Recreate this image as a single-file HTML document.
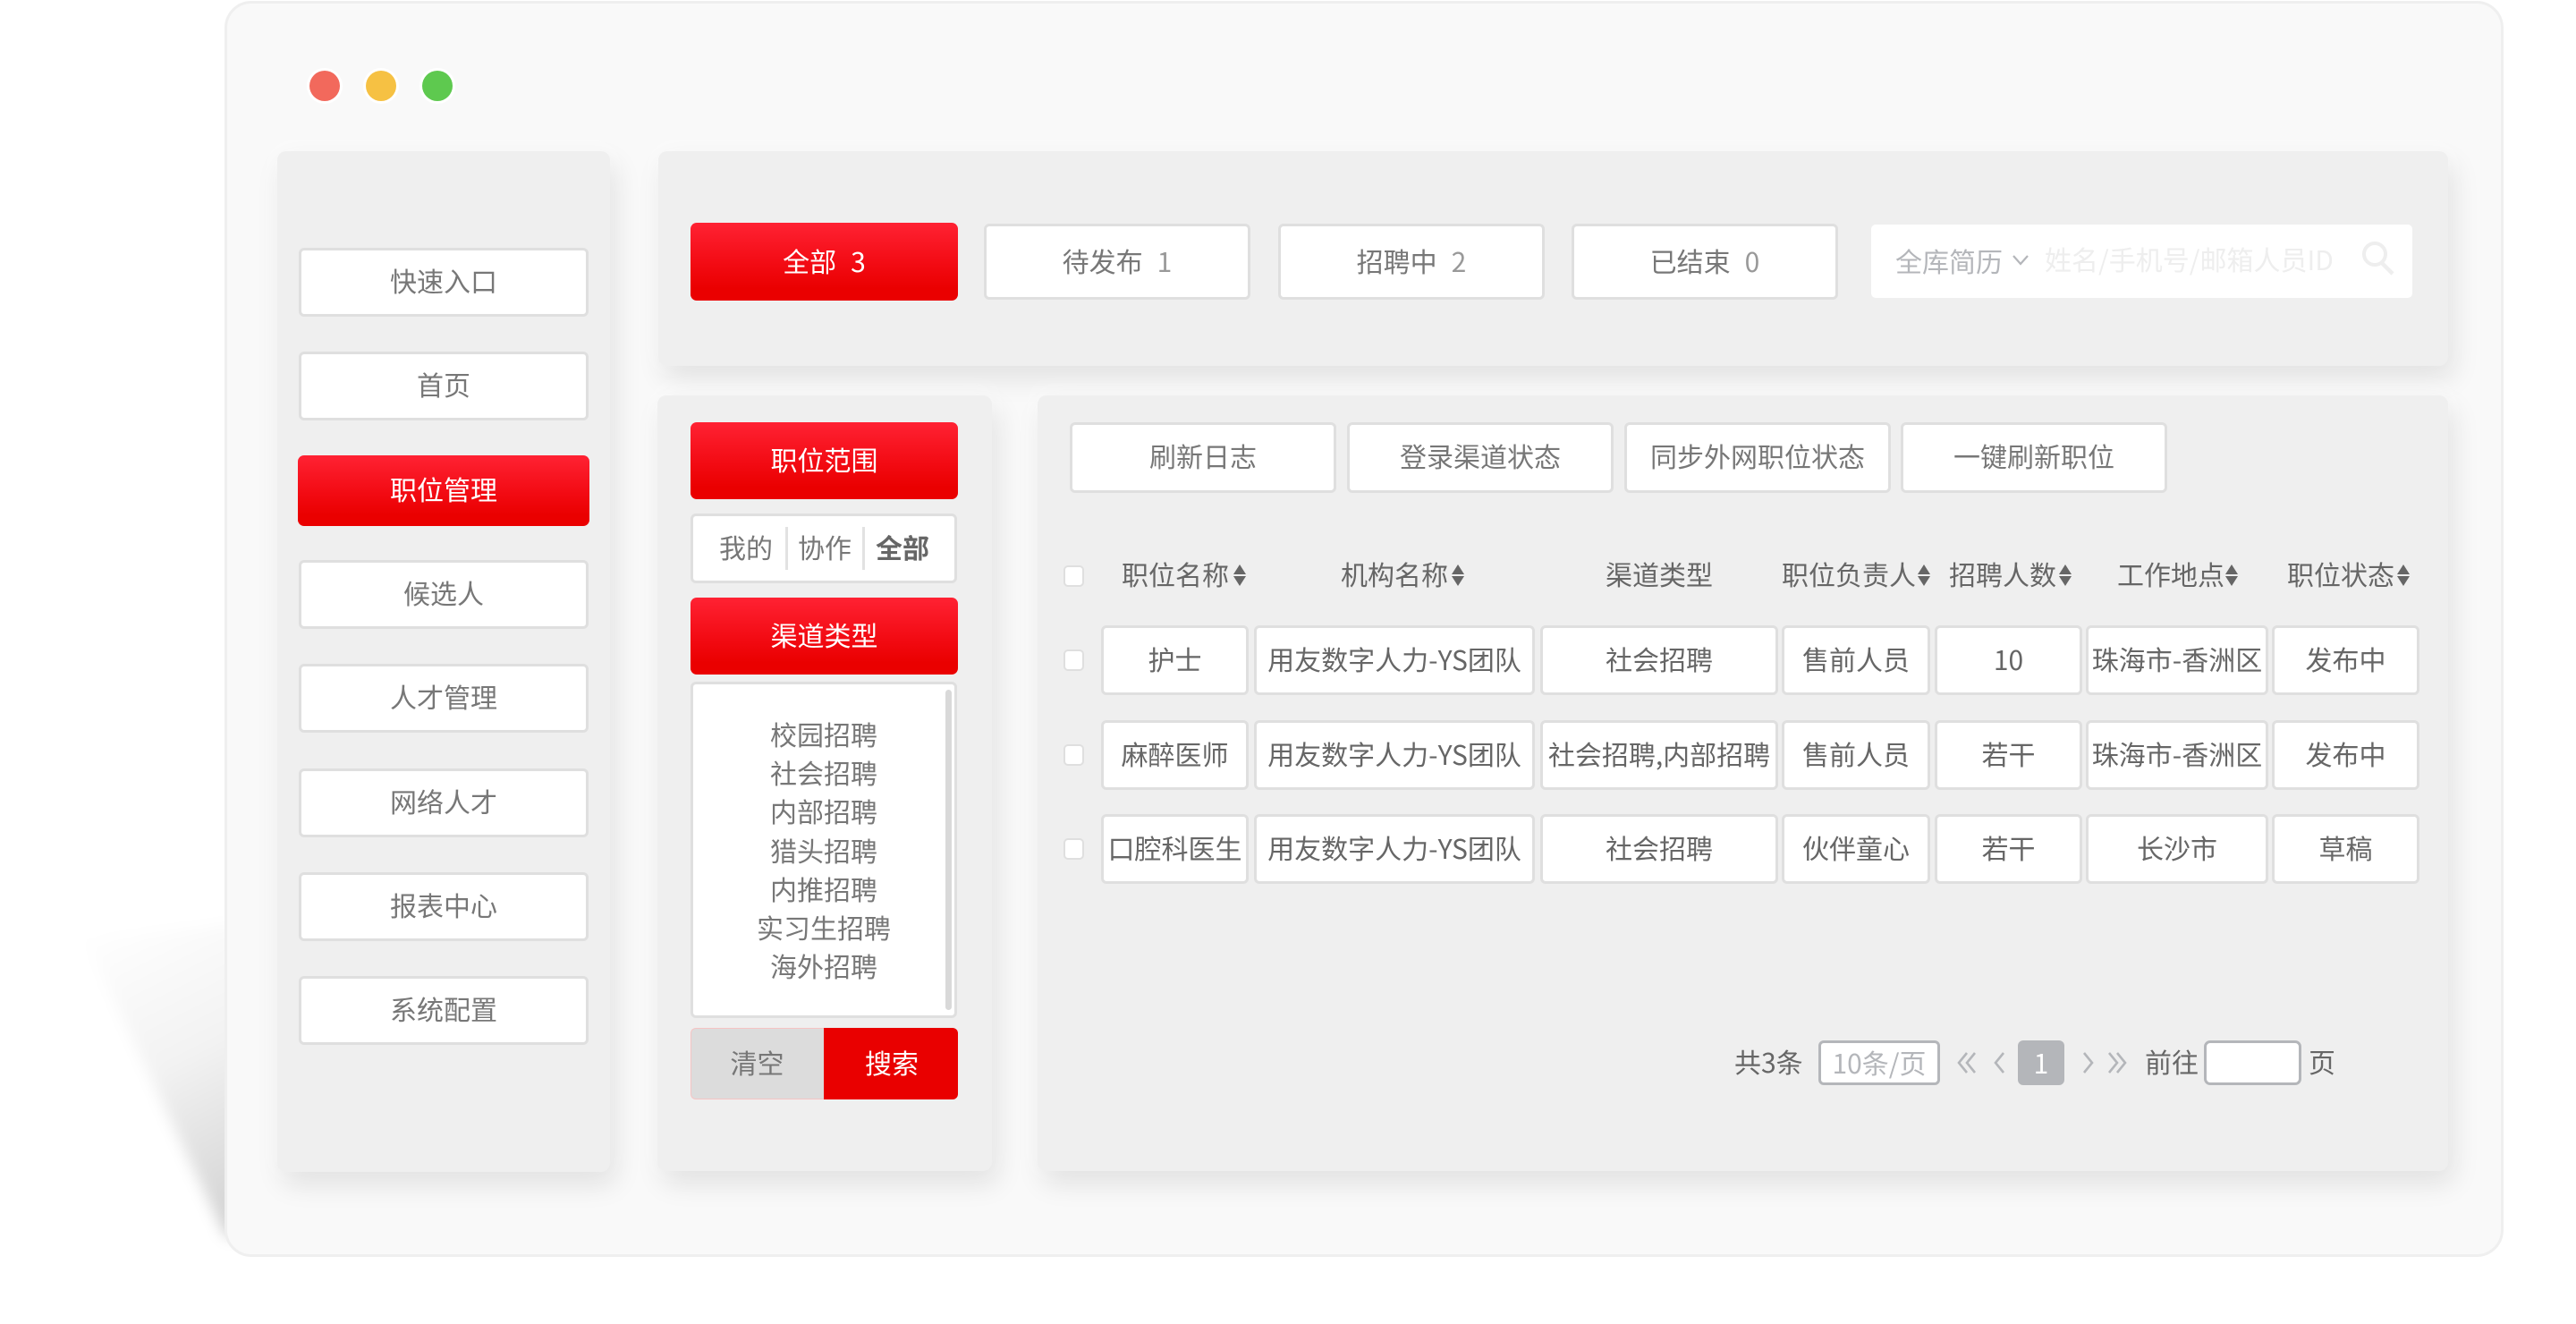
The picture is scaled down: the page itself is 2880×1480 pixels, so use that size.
<!DOCTYPE html>
<html lang="zh-CN">
<head>
<meta charset="utf-8">
<title>职位管理</title>
<style>
html,body{margin:0;padding:0;background:#fff;}
body{position:relative;width:2880px;height:1480px;overflow:hidden;font-family:"Noto Sans CJK SC","Liberation Sans",sans-serif;font-size:30px;color:#777;}
div,span.a{position:absolute;box-sizing:border-box;}
.win{left:251px;top:1px;width:2548px;height:1404px;background:#f9f9f9;border:3px solid #efefef;border-radius:30px;}
.dot{width:34px;height:34px;border-radius:50%;top:79px;box-shadow:0 0 0 3px #fff;}
.panel{background:#efefef;border-radius:10px;box-shadow:6px 14px 30px rgba(0,0,0,.1),0 0 24px 6px rgba(255,255,255,.5);}
.b{background:#fff;border:3px solid #dfdfdf;border-radius:6px;display:flex;align-items:center;justify-content:center;white-space:nowrap;line-height:1;color:#777;padding-bottom:4px;}
.r{background:linear-gradient(180deg,#ff2233 0%,#f20a12 55%,#ea0000 85%);border-radius:7px;color:#fff;display:flex;align-items:center;justify-content:center;white-space:nowrap;line-height:1;padding-bottom:4px;}
.n{height:77px;left:334px;width:324px;padding-bottom:6px;}
.tab{top:250px;height:85px;width:298px;}
.tab i,.r i{font-style:normal;margin-left:16px;color:#999;}
.r i{color:#fff;}
.act{top:472px;height:79px;padding-bottom:6px;}
.cb{left:1189px;width:23px;height:24px;background:#fff;border:2px solid #dfdfdf;border-radius:5px;}
.c{height:78px;color:#666;}
.th{top:620px;height:42px;line-height:42px;color:#666;white-space:nowrap;}
.sort{top:631px;width:14px;height:24px;}
.sort:before,.sort:after{content:"";position:absolute;left:0;border-left:7px solid transparent;border-right:7px solid transparent;}
.sort:before{top:0;border-bottom:11px solid #666;}
.sort:after{bottom:0;border-top:11px solid #666;}
.li{left:773px;width:296px;text-align:center;height:44px;line-height:44px;color:#777;}
.t{height:44px;line-height:44px;white-space:nowrap;color:#666;}
</style>
</head>
<body>

<svg style="position:absolute;left:0;top:0" width="400" height="1480">
  <defs>
    <linearGradient id="sg" x1="95" y1="1040" x2="270" y2="1390" gradientUnits="userSpaceOnUse">
      <stop offset="0" stop-color="#000" stop-opacity="0"/>
      <stop offset=".45" stop-color="#000" stop-opacity=".05"/>
      <stop offset="1" stop-color="#000" stop-opacity=".19"/>
    </linearGradient>
    <filter id="bl" x="-30%" y="-30%" width="160%" height="160%"><feGaussianBlur stdDeviation="8"/></filter>
  </defs>
  <polygon points="95,1050 290,1030 290,1382 252,1382" fill="url(#sg)" filter="url(#bl)"/>
</svg>

<div class="win"></div>
<div class="dot" style="left:346px;background:#f2695c"></div>
<div class="dot" style="left:409px;background:#f6c143"></div>
<div class="dot" style="left:472px;background:#5ec94f"></div>

<!-- sidebar -->
<div class="panel" style="left:310px;top:169px;width:372px;height:1141px"></div>
<div class="b n" style="top:277px">快速入口</div>
<div class="b n" style="top:393px">首页</div>
<div class="r" style="left:333px;top:509px;width:326px;height:79px;padding-bottom:6px">职位管理</div>
<div class="b n" style="top:626px">候选人</div>
<div class="b n" style="top:742px">人才管理</div>
<div class="b n" style="top:859px">网络人才</div>
<div class="b n" style="top:975px">报表中心</div>
<div class="b n" style="top:1091px">系统配置</div>

<!-- top panel -->
<div class="panel" style="left:736px;top:169px;width:2001px;height:240px"></div>
<div class="r" style="left:772px;top:249px;width:299px;height:87px">全部<i>3</i></div>
<div class="b tab" style="left:1100px">待发布<i>1</i></div>
<div class="b tab" style="left:1429px">招聘中<i>2</i></div>
<div class="b tab" style="left:1757px">已结束<i>0</i></div>
<div style="left:2092px;top:251px;width:605px;height:82px;background:#fff;border-radius:5px"></div>
<div class="t" style="left:2119px;top:269px;color:#b4b6ba">全库简历</div>
<svg style="position:absolute;left:2249px;top:284px" width="20" height="14"><path d="M2 2 L10 11 L18 2" fill="none" stroke="#b4b6ba" stroke-width="2.2"/></svg>
<div class="t" style="left:2286px;top:267px;color:#eeeeee">姓名/手机号/邮箱人员ID</div>
<svg style="position:absolute;left:2640px;top:268px" width="40" height="40"><circle cx="15" cy="16" r="12" fill="none" stroke="#eeeeee" stroke-width="4"/><path d="M23 26 L35 38" fill="none" stroke="#eeeeee" stroke-width="4.5"/></svg>

<!-- filter panel -->
<div class="panel" style="left:735px;top:442px;width:374px;height:867px"></div>
<div class="r" style="left:772px;top:472px;width:299px;height:86px">职位范围</div>
<div class="b" style="left:772px;top:574px;width:298px;height:78px"></div>
<div class="t" style="left:804px;top:589px;color:#777">我的</div>
<div style="left:878px;top:589px;width:3px;height:48px;background:#e2e2e2"></div>
<div class="t" style="left:892px;top:589px;color:#777">协作</div>
<div style="left:964px;top:589px;width:3px;height:48px;background:#e2e2e2"></div>
<div class="t" style="left:979px;top:589px;color:#666;font-weight:700">全部</div>
<div class="r" style="left:772px;top:668px;width:299px;height:86px">渠道类型</div>
<div class="b" style="left:772px;top:762px;width:298px;height:376px"></div>
<div style="left:1057px;top:771px;width:7px;height:358px;background:#d9d9d9;border-radius:4px"></div>
<div class="li" style="top:798px">校园招聘</div>
<div class="li" style="top:841px">社会招聘</div>
<div class="li" style="top:884px">内部招聘</div>
<div class="li" style="top:928px">猎头招聘</div>
<div class="li" style="top:971px">内推招聘</div>
<div class="li" style="top:1014px">实习生招聘</div>
<div class="li" style="top:1057px">海外招聘</div>
<div style="left:772px;top:1149px;width:150px;height:80px;background:#dcdcdc;border:1px solid #f5c4c4;border-right:0;border-radius:6px 0 0 6px;display:flex;align-items:center;justify-content:center;color:#777;line-height:1;padding:0 2px 4px 0">清空</div>
<div style="left:921px;top:1149px;width:150px;height:80px;background:#e90000;border-radius:0 6px 6px 0;display:flex;align-items:center;justify-content:center;color:#fff;line-height:1;padding:0 0 4px 2px">搜索</div>

<!-- main panel -->
<div class="panel" style="left:1160px;top:442px;width:1577px;height:867px"></div>
<div class="b act" style="left:1196px;width:298px">刷新日志</div>
<div class="b act" style="left:1506px;width:298px">登录渠道状态</div>
<div class="b act" style="left:1816px;width:298px">同步外网职位状态</div>
<div class="b act" style="left:2125px;width:298px">一键刷新职位</div>

<!-- table header -->
<div class="cb" style="top:632px"></div>
<div class="th" style="left:1254px">职位名称</div><div class="sort" style="left:1379px"></div>
<div class="th" style="left:1499px">机构名称</div><div class="sort" style="left:1623px"></div>
<div class="th" style="left:1795px">渠道类型</div>
<div class="th" style="left:1992px">职位负责人</div><div class="sort" style="left:2144px"></div>
<div class="th" style="left:2179px">招聘人数</div><div class="sort" style="left:2302px"></div>
<div class="th" style="left:2367px">工作地点</div><div class="sort" style="left:2488px"></div>
<div class="th" style="left:2557px">职位状态</div><div class="sort" style="left:2680px"></div>

<!-- row 1 -->
<div class="cb" style="top:726px"></div>
<div class="b c" style="left:1231px;top:699px;width:165px">护士</div>
<div class="b c" style="left:1402px;top:699px;width:314px">用友数字人力-YS团队</div>
<div class="b c" style="left:1722px;top:699px;width:266px">社会招聘</div>
<div class="b c" style="left:1992px;top:699px;width:166px">售前人员</div>
<div class="b c" style="left:2163px;top:699px;width:165px">10</div>
<div class="b c" style="left:2332px;top:699px;width:204px">珠海市-香洲区</div>
<div class="b c" style="left:2540px;top:699px;width:165px">发布中</div>

<!-- row 2 -->
<div class="cb" style="top:832px"></div>
<div class="b c" style="left:1231px;top:805px;width:165px">麻醉医师</div>
<div class="b c" style="left:1402px;top:805px;width:314px">用友数字人力-YS团队</div>
<div class="b c" style="left:1722px;top:805px;width:266px">社会招聘,内部招聘</div>
<div class="b c" style="left:1992px;top:805px;width:166px">售前人员</div>
<div class="b c" style="left:2163px;top:805px;width:165px">若干</div>
<div class="b c" style="left:2332px;top:805px;width:204px">珠海市-香洲区</div>
<div class="b c" style="left:2540px;top:805px;width:165px">发布中</div>

<!-- row 3 -->
<div class="cb" style="top:937px"></div>
<div class="b c" style="left:1231px;top:910px;width:165px">口腔科医生</div>
<div class="b c" style="left:1402px;top:910px;width:314px">用友数字人力-YS团队</div>
<div class="b c" style="left:1722px;top:910px;width:266px">社会招聘</div>
<div class="b c" style="left:1992px;top:910px;width:166px">伙伴童心</div>
<div class="b c" style="left:2163px;top:910px;width:165px">若干</div>
<div class="b c" style="left:2332px;top:910px;width:204px">长沙市</div>
<div class="b c" style="left:2540px;top:910px;width:165px">草稿</div>

<!-- pagination -->
<div class="t" style="left:1939px;top:1164px">共3条</div>
<div style="left:2033px;top:1163px;width:136px;height:50px;background:#fff;border:3px solid #b4b6ba;border-radius:6px;display:flex;align-items:center;justify-content:center;color:#b4b6ba;line-height:1;white-space:nowrap;padding-bottom:3px">10条/页</div>
<svg style="position:absolute;left:2184px;top:1174px" width="200" height="30" fill="none" stroke="#b4b6ba" stroke-width="2.6">
  <path d="M15 3 L6 14 L15 25 M24 3 L15 14 L24 25"/>
  <path d="M56 3 L47 14 L56 25"/>
  <path d="M146 3 L155 14 L146 25"/>
  <path d="M174 3 L183 14 L174 25 M183 3 L192 14 L183 25"/>
</svg>
<div style="left:2256px;top:1163px;width:52px;height:50px;background:#b4b6ba;border-radius:6px;display:flex;align-items:center;justify-content:center;color:#fff;line-height:1;padding-bottom:3px">1</div>
<div class="t" style="left:2398px;top:1164px">前往</div>
<div style="left:2464px;top:1163px;width:109px;height:50px;background:#fff;border:3px solid #b4b6ba;border-radius:7px"></div>
<div class="t" style="left:2581px;top:1164px">页</div>

</body>
</html>
